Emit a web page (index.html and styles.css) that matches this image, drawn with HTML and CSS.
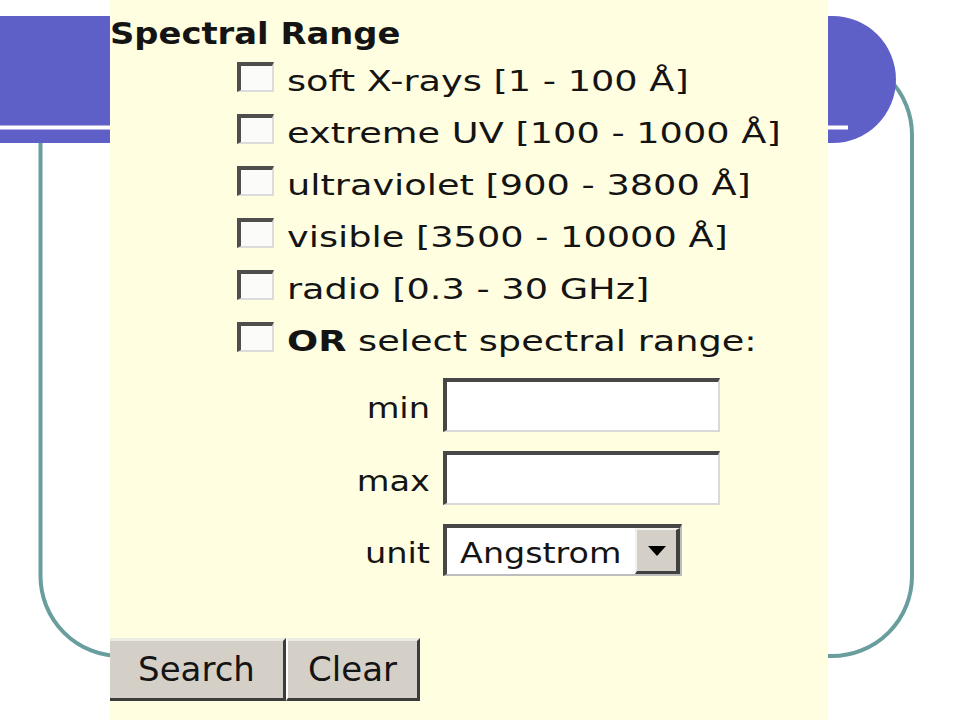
FILE: index.html
```html
<!DOCTYPE html>
<html>
<head>
<meta charset="utf-8">
<title>Spectral Range</title>
<link rel="stylesheet" href="styles.css">
</head>
<body>
<div class="slide">
  <svg class="deco" width="960" height="720" viewBox="0 0 960 720" aria-hidden="true">
    <rect x="40.5" y="55" width="871.5" height="601" rx="80" ry="80" fill="none" stroke="#6a9e9e" stroke-width="4"/>
    <path d="M0 16 H832.5 A63.5 63.5 0 0 1 832.5 143 H0 Z" fill="#5f5fc8"/>
    <rect x="0" y="125.5" width="848" height="4" fill="#ffffff"/>
  </svg>
  <form class="panel">
    <h2 class="title">Spectral Range</h2>
    <div class="options">
      <label class="opt"><input type="checkbox" class="cb"><span class="opt-text">soft X-rays [1 - 100 Å]</span></label>
      <label class="opt"><input type="checkbox" class="cb"><span class="opt-text">extreme UV [100 - 1000 Å]</span></label>
      <label class="opt"><input type="checkbox" class="cb"><span class="opt-text">ultraviolet [900 - 3800 Å]</span></label>
      <label class="opt"><input type="checkbox" class="cb"><span class="opt-text">visible [3500 - 10000 Å]</span></label>
      <label class="opt"><input type="checkbox" class="cb"><span class="opt-text">radio [0.3 - 30 GHz]</span></label>
      <label class="opt"><input type="checkbox" class="cb"><span class="opt-text"><b>OR</b> select spectral range:</span></label>
    </div>
    <div class="fields">
      <div class="field"><span class="flabel">min</span><input type="text" class="tinput"></div>
      <div class="field"><span class="flabel">max</span><input type="text" class="tinput"></div>
      <div class="field"><span class="flabel">unit</span>
        <div class="select"><span class="sel-text">Angstrom</span><span class="sel-btn"><span class="tri"></span></span></div>
      </div>
    </div>
    <div class="buttons">
      <button type="button" class="btn btn-search">Search</button>
      <button type="button" class="btn btn-clear">Clear</button>
    </div>
  </form>
</div>
</body>
</html>
```

FILE: styles.css
```css
body {
  margin: 0;
  background: #ffffff;
}

.slide {
  position: relative;
  width: 960px;
  height: 720px;
  overflow: hidden;
  font-family: "DejaVu Sans", Verdana, sans-serif;
  color: #141414;
}

.deco {
  position: absolute;
  left: 0;
  top: 0;
}

.panel {
  position: relative;
  box-sizing: border-box;
  width: 718px;
  height: 720px;
  margin: 0 0 0 110px;
  padding-top: 13px;
  background: #fffee0;
  display: flex;
  flex-direction: column;
}

.title {
  margin: 0 0 3px;
  font-size: 31px;
  line-height: 40px;
  font-weight: bold;
  white-space: nowrap;
  transform: scaleX(1.09);
  transform-origin: 0 50%;
}

.options {
  padding-left: 127px;
}

.opt {
  display: flex;
  align-items: flex-start;
  height: 52px;
  line-height: 52px;
  font-size: 28px;
}

.cb {
  -webkit-appearance: none;
  appearance: none;
  flex: none;
  box-sizing: border-box;
  width: 37px;
  height: 30px;
  margin: 6px 13px 0 0;
  border-style: solid;
  border-width: 4px 2px 2px 4px;
  border-color: #4e4e4e #dcdcdc #dcdcdc #4e4e4e;
  background: #fbfbf9;
}

.opt-text {
  display: inline-block;
  white-space: nowrap;
  transform: scaleX(1.31);
  transform-origin: 0 50%;
}

.fields {
  margin-top: 10px;
  display: flex;
  flex-direction: column;
  gap: 19px;
}

.field {
  display: flex;
  align-items: center;
  gap: 13px;
}

.flabel {
  width: 320px;
  margin-top: 6px;
  text-align: right;
  font-size: 28px;
  transform: scaleX(1.2);
  transform-origin: 100% 50%;
}

.tinput {
  box-sizing: border-box;
  width: 277px;
  height: 54px;
  margin: 0;
  padding: 0 8px;
  border-style: solid;
  border-width: 4px 2px 2px 4px;
  border-color: #474747 #d9d9d9 #d9d9d9 #474747;
  background: #ffffff;
  font: inherit;
  font-size: 28px;
  outline: none;
}

.select {
  box-sizing: border-box;
  width: 239px;
  height: 52px;
  display: flex;
  align-items: stretch;
  border-style: solid;
  border-width: 4px 2px 2px 4px;
  border-color: #474747 #bdbdbd #bdbdbd #474747;
  background: #ffffff;
}

.sel-text {
  flex: 1;
  padding: 4px 0 0 11px;
  font-size: 28px;
  line-height: 44px;
  white-space: nowrap;
  transform: scaleX(1.19);
  transform-origin: 0 50%;
}

.sel-btn {
  box-sizing: border-box;
  width: 45px;
  display: flex;
  align-items: center;
  justify-content: center;
  border-style: solid;
  border-width: 2px 4px 3px 2px;
  border-color: #f4f2ee #404040 #404040 #f4f2ee;
  background: #d4d0c8;
}

.tri {
  width: 0;
  height: 0;
  border-left: 9px solid transparent;
  border-right: 9px solid transparent;
  border-top: 10px solid #000000;
}

.buttons {
  margin-top: 62px;
  display: flex;
}

.btn {
  box-sizing: border-box;
  height: 63px;
  margin: 0;
  padding: 0;
  font: inherit;
  font-size: 34px;
  line-height: 57px;
  color: #141414;
  background: #d4d0c8;
  border-style: solid;
  border-width: 3px 3px 3px 0;
  border-color: #eceae4 #3c3c3c #3c3c3c #ffffff;
}

.btn-search {
  width: 176px;
}

.btn-clear {
  width: 134px;
  border-left-width: 2px;
}
```
